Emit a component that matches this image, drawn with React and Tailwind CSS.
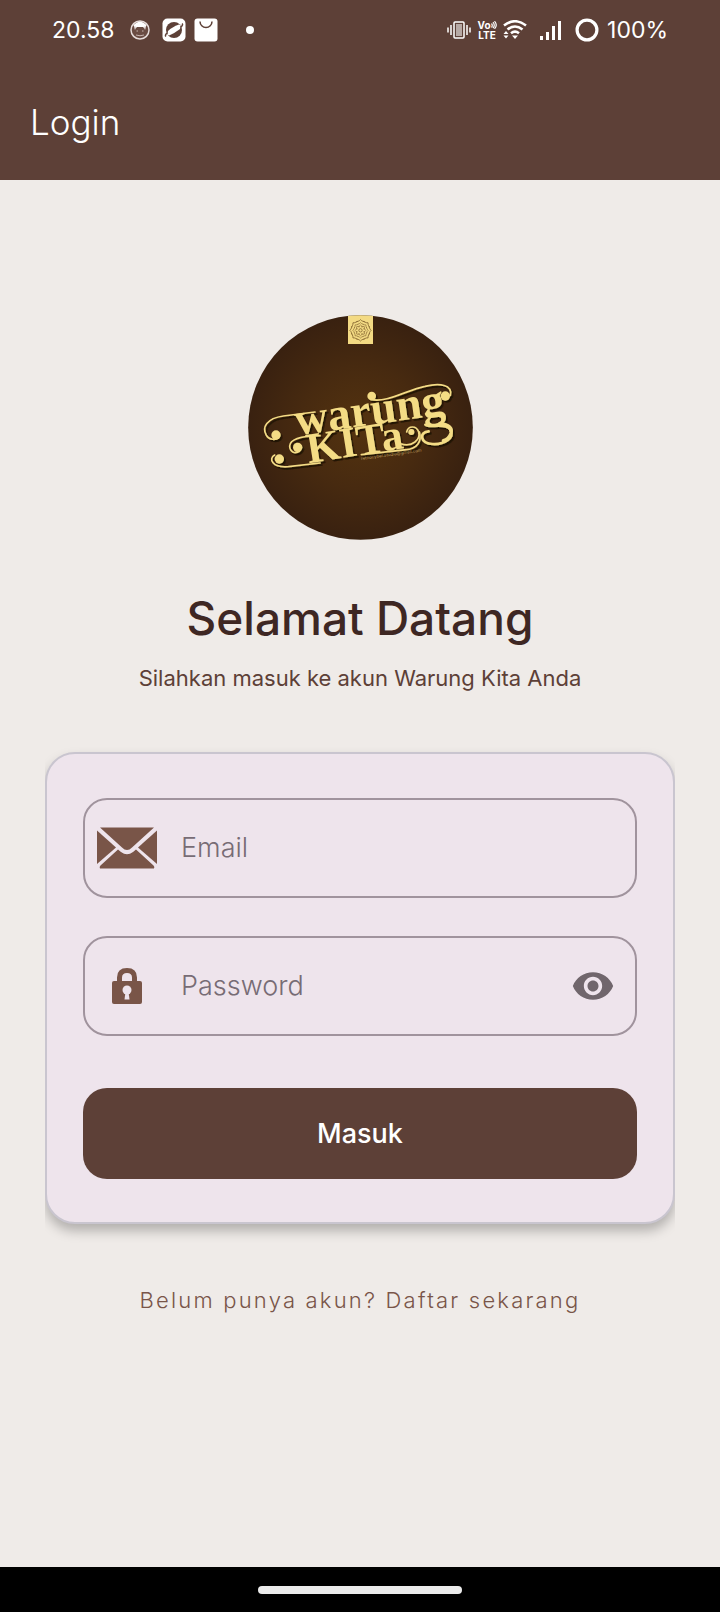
function StatusIcons() {
  return (
    <div className="flex items-center text-white">
      <svg className="h-5 w-6" viewBox="0 0 24 20" fill="none" stroke="currentColor" aria-hidden="true">
        <rect x="7" y="2" width="10" height="16" rx="1" strokeWidth="1.500" />
        <rect x="9" y="4" width="6" height="12" fill="currentColor" stroke="none" opacity="0.550" />
        <path d="M4 5v10M1 7.500v5M20 5v10M23 7.500v5" strokeWidth="1.500" />
      </svg>
      <div className="ml-1 flex w-6 flex-col items-center font-bold">
        <div className="flex items-center">
          <span className="text-[10px] leading-[10px]">Vo</span>
          <svg className="h-2 w-1.5" viewBox="0 0 6 8" fill="none" stroke="currentColor" strokeWidth="1.200" aria-hidden="true">
            <path d="M0.500 2.500q1.500 1.800 0 4M2 1.200q2.500 3 0 6M3.500 0.200q3.500 4 0 7.600" />
          </svg>
        </div>
        <span className="text-[10px] leading-[10px]">LTE</span>
      </div>
      <svg className="ml-1 h-5 w-6" viewBox="0 0 24 20" fill="none" stroke="currentColor" strokeWidth="2.600" aria-hidden="true">
        <path d="M1 5.500Q12 -3 23 5.500M4.500 9.500Q12 3.500 19.500 9.500M8 13.200Q12 10 16 13.200" />
        <path d="M9 15.500h6l-3 3.500zM0.500 14l2.500-3 2.500 3zM0.500 15.500l2.500 3 2.500-3z" fill="currentColor" stroke="none" />
      </svg>
      <svg className="ml-3 h-5 w-6" viewBox="0 0 24 20" fill="currentColor" aria-hidden="true">
        <path d="M1 16h3v4H1zM7 12h3v8H7zM13 6h3v14h-3zM19 1h3v19h-3z" />
      </svg>
      <svg className="ml-3 h-6 w-6" viewBox="0 0 24 24" fill="none" stroke="currentColor" strokeWidth="3.200" aria-hidden="true">
        <circle cx="12" cy="12" r="9.900" />
      </svg>
      <span className="ml-2 text-[23px] leading-8">100%</span>
    </div>
  );
}

function StatusBar() {
  return (
    <div className="flex h-15 items-center justify-between pr-13 pl-13">
      <div className="flex items-center text-white">
        <span className="text-[23px] leading-8">20.58</span>
        <svg className="ml-4 h-5 w-5" viewBox="0 0 20 20" aria-hidden="true">
          <circle cx="10" cy="10" r="9" fill="#6a4c43" stroke="#e6dcda" strokeWidth="1.500" />
          <path d="M3.500 5Q10 -2 16.500 5L15 9l-2-2H7L5 9z" fill="#fff" />
          <path d="M5 6.500v3M15 6.500v3M6.500 11h1.500M12 11h1.500M6 15q4 1.500 8 0" stroke="#c7b5b1" fill="none" />
        </svg>
        <svg className="ml-3 h-6 w-6" viewBox="0 0 24 24" aria-hidden="true">
          <rect x="0.500" y="0.500" width="23" height="23" rx="5" fill="#fff" />
          <circle cx="12" cy="12" r="8" fill="#5d4037" />
          <path d="M5.500 17L6 13Q10 9 17 6.500L18.500 7L18 11Q13 15 7 17.500z" fill="#fff" />
          <path d="M5 15Q2.500 17.500 4 18.500M19 9Q21.500 6.500 20 5.500" fill="none" stroke="#5d4037" strokeWidth="1.500" />
        </svg>
        <svg className="ml-2 h-6 w-6" viewBox="0 0 24 24" aria-hidden="true">
          <rect x="0.500" y="0.500" width="23" height="23" rx="3" fill="#fff" />
          <path d="M6 3.500a6 6 0 0 0 12 0" fill="none" stroke="#5d4037" strokeWidth="1.500" />
        </svg>
        <span className="ml-7 h-2 w-2 rounded-full bg-white" />
      </div>
      <StatusIcons />
    </div>
  );
}

function Logo() {
  return (
    <svg className="h-[225px] w-[225px]" viewBox="24 15 675 675" role="img" aria-label="Warung Kita">
      <defs>
        <radialGradient id="disc">
          <stop offset="0" stopColor="#54330f" />
          <stop offset="0.550" stopColor="#472a10" />
          <stop offset="1" stopColor="#392110" />
        </radialGradient>
        <clipPath id="round">
          <circle cx="361.500" cy="352.500" r="337" />
        </clipPath>
        <filter id="drop" x="-10%" y="-10%" width="120%" height="120%">
          <feDropShadow dx="5" dy="6" stdDeviation="2" floodColor="#1c0e04" floodOpacity="0.800" />
        </filter>
      </defs>
      <circle cx="361.500" cy="352.500" r="337" fill="url(#disc)" />
      <g clipPath="url(#round)">
        <rect x="324" y="12" width="75" height="90" fill="#f3da83" />
      </g>
      <g fill="none" stroke="#6b4b1c" strokeWidth="2">
        {[0, 45, 90, 135, 180, 225, 270, 315].map((a) => (
          <g key={a} transform={`rotate(${a} 361.500 61)`}>
            <path d="M349 36q2-2 5-2q4-1 7.500-5q3.500 4 7.500 5q3 0 5 2" />
            <path d="M353 43q5-1 8.500-5q3.500 4 8.500 5" strokeWidth="1.500" />
            <path d="M356 52q1-5 5.500-7q4.500 2 5.500 7" strokeWidth="1.500" />
          </g>
        ))}
        <circle cx="361.500" cy="61" r="5" />
      </g>
      <g filter="url(#drop)" fill="#f4dc85" stroke="none">
        <g fill="none" stroke="#f4dc85" strokeWidth="5" strokeLinecap="round">
          <path d="M225 306L130 318C80 325 65 352 79 376C87 390 108 392 117 380" />
          <path d="M392 268C440 280 500 240 555 229C600 218 638 224 631 256" />
          <path d="M240 377C190 378 150 385 149 408C149 426 165 432 178 424" />
          <path d="M240 459L145 470C97 474 84 446 104 435" />
          <path d="M484 402C518 412 542 388 536 366C530 346 504 346 500 366" />
          <path d="M364 434L500 419C532 415 546 395 538 366" />
          <path d="M556 344C566 356 615 336 630 358C646 384 612 404 578 402C540 400 536 366 566 364" strokeWidth="8" />
          <path d="M600 340Q640 346 633 370Q626 388 610 392" strokeWidth="10" />
        </g>
        <circle cx="108" cy="375" r="14" />
        <circle cx="395" cy="258" r="13" />
        <circle cx="616" cy="258" r="14" />
        <circle cx="173" cy="412" r="14" />
        <circle cx="118" cy="447" r="14" />
        <circle cx="514" cy="366" r="9" />
        <g className="font-['Liberation_Serif',serif] font-bold">
          <text x="170" y="376" fontSize="138" transform="rotate(-8 170 376)">warung</text>
          <text x="206" y="460" fontSize="130" transform="rotate(-9 206 460)">KITa</text>
        </g>
      </g>
      <text x="364" y="450" fontSize="13" fill="#b99a5c" transform="rotate(-8 364 450)" className="font-['Inter',sans-serif]">
        retnocyber.studio@gmail.com
      </text>
    </svg>
  );
}

function MailIcon() {
  return (
    <svg className="h-11 w-15" viewBox="0 0 60 44" fill="#795548" aria-hidden="true">
      <path d="M3 1.500h54L35 21.500q-5 5-10 0z" />
      <path d="M0 4.500L19 21.500 0 38z" />
      <path d="M60 4.500L41 21.500 60 38z" />
      <path d="M3 42.500Q2 41 3.500 39.500L21 23.500l3 2.500q6 4.500 12 0l3-2.500L56.500 39.500Q58 41 57 42.500z" />
    </svg>
  );
}

function LockIcon() {
  return (
    <svg className="h-9 w-8" viewBox="0 0 32 36" aria-hidden="true">
      <path d="M8.500 15V9.500q0-7 7.500-7t7.500 7V15" fill="none" stroke="#795548" strokeWidth="5" />
      <rect x="1" y="13" width="30" height="23" rx="2" fill="#795548" />
      <circle cx="16" cy="22" r="4.500" fill="#eee4ec" />
      <path d="M14.500 24h3l1 7.500h-5z" fill="#eee4ec" />
    </svg>
  );
}

function EyeIcon() {
  return (
    <svg className="h-11 w-11" viewBox="0 0 24 24" fill="#70666c" aria-hidden="true">
      <path d="M12 4.500C7 4.500 2.730 7.610 1 12c1.730 4.390 6 7.500 11 7.500s9.270-3.110 11-7.500c-1.730-4.390-6-7.500-11-7.500zM12 17c-2.760 0-5-2.240-5-5s2.240-5 5-5 5 2.240 5 5-2.240 5-5 5zm0-8c-1.660 0-3 1.340-3 3s1.340 3 3 3 3-1.340 3-3-1.340-3-3-3z" />
    </svg>
  );
}

function Field({ id, label, type, icon, action }) {
  return (
    <div className="flex h-25 items-center rounded-3xl border-2 border-[#a0939d] px-3">
      <label htmlFor={id} className="flex w-15 shrink-0 justify-center" aria-label={label}>
        {icon}
      </label>
      <input
        id={id}
        type={type}
        placeholder={label}
        className="ml-6 min-w-0 flex-1 bg-transparent text-[27px] leading-9 font-light text-[#4a4048] outline-none placeholder:text-[#776c75]"
      />
      {action}
    </div>
  );
}

export default function App() {
  return (
    <div className="flex min-h-screen flex-col bg-[#efebe8] font-['Inter',sans-serif]">
      <header className="bg-[#5d4037]">
        <StatusBar />
        <h1 className="px-[30px] pt-[38px] pb-[34px] text-[35px] leading-12 font-light text-white">Login</h1>
      </header>

      <main className="flex flex-1 flex-col items-center px-[45px] pt-[135px]">
        <Logo />
        <h2 className="mt-12 text-[46px] leading-15 font-medium text-[#3e2723]">Selamat Datang</h2>
        <p className="mt-[14px] text-[22px] leading-8 text-[#5d4037]">
          Silahkan masuk ke akun Warung Kita Anda
        </p>

        <form
          className="mt-[58px] flex w-full flex-col rounded-[30px] border-2 border-[#c9c5cf] bg-[#eee4ec] px-9 pt-11 pb-[43px] shadow-[0_7px_12px_rgba(0,0,0,0.25)] [clip-path:inset(-20px_0_-30px_0)]"
          onSubmit={(e) => e.preventDefault()}
        >
          <Field id="email" label="Email" type="email" icon={<MailIcon />} />
          <div className="mt-[38px]">
            <Field
              id="password"
              label="Password"
              type="password"
              icon={<LockIcon />}
              action={
                <button type="button" aria-label="Tampilkan password" className="mr-2">
                  <EyeIcon />
                </button>
              }
            />
          </div>
          <button type="submit" className="mt-13 h-[91px] rounded-3xl bg-[#5d4037] text-[27px] leading-9 font-medium text-white">
            Masuk
          </button>
        </form>

        <a href="#daftar" className="mt-15 text-[22px] leading-8 font-light tracking-widest text-[#795548]">
          Belum punya akun? Daftar sekarang
        </a>
      </main>

      <footer className="flex h-[45px] items-center justify-center bg-black">
        <span className="h-2 w-51 rounded-full bg-[#ebebeb]" />
      </footer>
    </div>
  );
}
